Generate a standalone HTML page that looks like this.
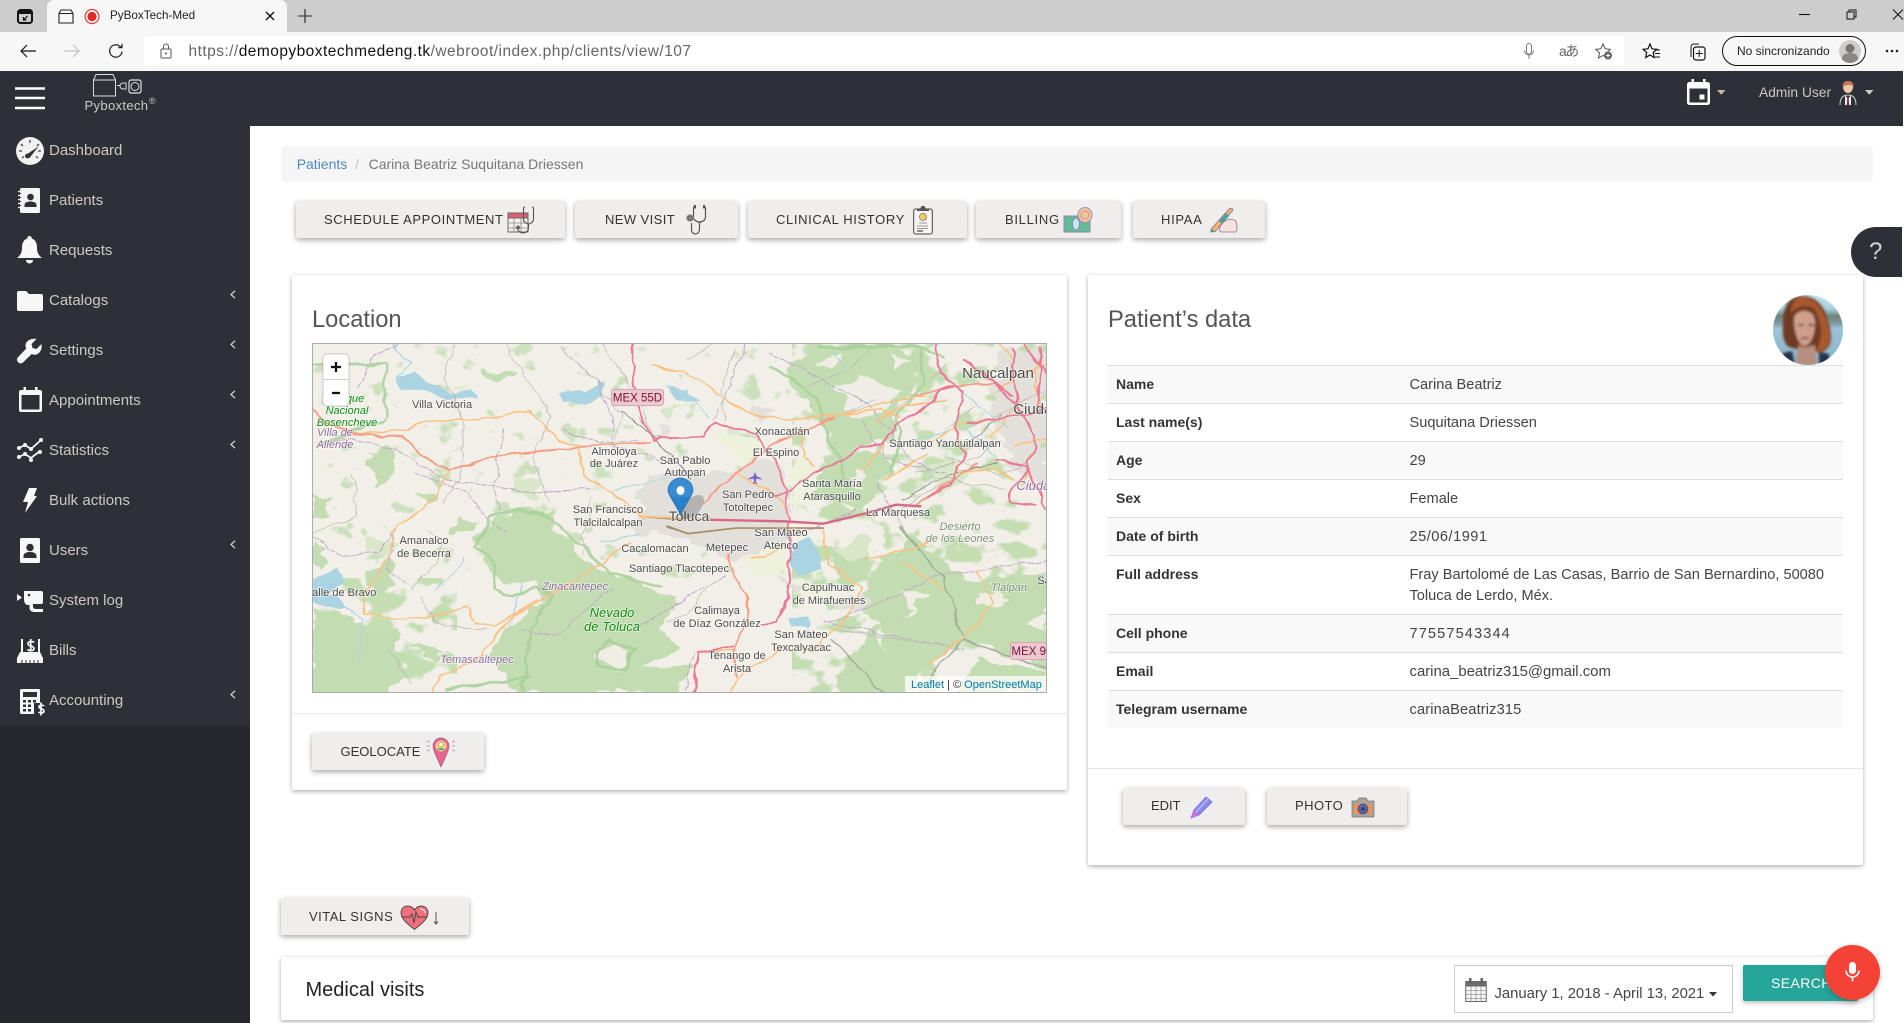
<!DOCTYPE html>
<html lang="en"><head><meta charset="utf-8"><title>PyBoxTech-Med</title>
<style>
html,body{margin:0;padding:0;width:1904px;height:1023px;overflow:hidden;background:#fff;font-family:"Liberation Sans",sans-serif;color:#333}
.a{position:absolute}
.t{position:absolute;white-space:nowrap;line-height:20px;height:20px}
svg{position:absolute;overflow:visible}
#strip{left:0;top:0;width:1904px;height:32px;background:#cdcdcd}
#tab{left:47px;top:0;width:240px;height:32px;background:#f7f7f7;border-radius:7px 7px 0 0}
#tool{left:0;top:32px;width:1904px;height:39px;background:#f7f7f7}
#addr{left:144px;top:36px;width:1480px;height:30px;background:#fff;border-radius:4px}
#pill{left:1722px;top:36px;width:142px;height:28px;border:1.5px solid #111;border-radius:15px}
#head{left:0;top:71px;width:1903px;height:55px;background:#2d3036}
#side{left:0;top:126px;width:250px;height:600px;background:#2d3036}
#side2{left:0;top:726px;width:250px;height:297px;background:#24272c}
.m{left:49px;font-size:15px;color:#cdc9c2}
.bc{left:281px;top:146px;width:1592px;height:36px;background:#f5f5f5;border-radius:4px}
.btn{position:absolute;background:#efeeec;border-radius:2px;box-shadow:0 2px 5px rgba(0,0,0,.26),0 2px 8px rgba(0,0,0,.1);height:37px}
.bt{font-size:13px;color:#333}
.card{position:absolute;background:#fff;border-radius:2px;box-shadow:0 2px 5px rgba(0,0,0,.26),0 0 4px rgba(0,0,0,.07)}
h3{position:absolute;margin:0;font-weight:400;font-size:23.700px;line-height:30px;color:#555;white-space:nowrap}
.row{position:absolute;left:1108px;width:735px;border-top:1px solid #ddd;box-sizing:border-box}
.z{background:#f9f9f9}
.l{left:1116px;font-size:14px;font-weight:700;color:#333}
.v{left:1409.5px;font-size:14.6px;color:#444}
#map path{vector-effect:non-scaling-stroke;fill:none;stroke-linejoin:round;stroke-linecap:round}
#map path.g{fill:#c3dcb1;stroke:none}
#map path.g2{fill:#d8e7c8;stroke:none}
#map path.u{fill:#e3e0db;stroke:none}
#map path.y{fill:#eff2da;stroke:none}
#map path.w{fill:#abd4e2;stroke:none}
#map path.c{fill:#f0eee4;stroke:none}
.or{stroke:#f9c283;stroke-width:1.7}
.sa{stroke:#f4a084;stroke-width:2}
.pk{stroke:#e87a96;stroke-width:2}
.gr{stroke:#bdbab4;stroke-width:.8}
.dg{stroke:#8d8b86;stroke-width:1}
.pu{stroke:#bfa8c9;stroke-width:1;stroke-dasharray:5 2}
.bo{stroke:#a8d09a;stroke-width:3;opacity:.85}
.br{stroke:#a2a89a;stroke-width:1.6;opacity:.9}
.ri{stroke:#a9d6e4;stroke-width:1.1}
#map text{font-family:"Liberation Sans",sans-serif;font-size:11px;fill:#4a4a4a;text-anchor:middle;paint-order:stroke;stroke:#fff;stroke-width:1.5px;stroke-opacity:.65}
#map text.f{fill:#0d8a0d;font-style:italic}
#map text.p{fill:#8f6a96;font-style:italic}
#map text.d{fill:#7c8f76;font-style:italic}
</style></head><body>

<!-- Browser chrome -->
<div class="a" id="strip"></div>
<div class="a" id="tab"></div>
<div class="a" id="tool"></div>
<div class="a" id="addr"></div>

<svg style="left:17px;top:9px" width="16" height="15" viewBox="0 0 16 15"><rect x="1" y="1" width="14" height="13" rx="2.5" fill="none" stroke="#111" stroke-width="2"/><rect x="1" y="1" width="14" height="4" fill="#111"/><path d="M10.5 7L6.5 11M6.5 8v3h3" stroke="#111" fill="none" stroke-width="1.2"/></svg>
<svg style="left:58px;top:9px" width="16" height="15" viewBox="0 0 16 15"><path d="M1 4.5h14V14H1zM1 4.5L3 1h10l2 3.5" fill="none" stroke="#222" stroke-width="1.1"/></svg>
<svg style="left:84px;top:9px" width="16" height="15" viewBox="0 0 16 15"><circle cx="8" cy="7.5" r="7" fill="#fff" stroke="#e53935" stroke-width="1.2"/><circle cx="8" cy="7.5" r="4.6" fill="#e5291f"/></svg>
<div class="t" style="left:110px;top:6px;font-size:11.700px;color:#222">PyBoxTech-Med</div>
<svg style="left:265px;top:11px" width="10" height="10" viewBox="0 0 10 10"><path d="M1 1l8 8M9 1l-8 8" stroke="#111" stroke-width="1.4"/></svg>
<svg style="left:298px;top:9px" width="14" height="14" viewBox="0 0 14 14"><path d="M7 0v14M0 7h14" stroke="#222" stroke-width="1.1"/></svg>
<svg style="left:1799px;top:13px" width="12" height="3"><path d="M0 1.5h11" stroke="#111" stroke-width="1.1"/></svg>
<svg style="left:1846px;top:9px" width="11" height="11" viewBox="0 0 11 11"><path d="M1 3h7v7H1zM3 3V1h7v7H8" fill="none" stroke="#111"/></svg>
<svg style="left:1892px;top:9px" width="12" height="11" viewBox="0 0 12 11"><path d="M1 .5l10 10M11 .5l-10 10" stroke="#111"/></svg>

<svg style="left:20px;top:44px" width="16" height="14" viewBox="0 0 16 14"><path d="M16 7H1M7 1L1 7l6 6" fill="none" stroke="#111" stroke-width="1.2"/></svg>
<svg style="left:64px;top:44px" width="16" height="14" viewBox="0 0 16 14"><path d="M0 7h15M9 1l6 6-6 6" fill="none" stroke="#c2c2c2" stroke-width="1.2"/></svg>
<svg style="left:108px;top:43px" width="16" height="16" viewBox="0 0 16 16"><path d="M14 8.5A6.2 6.2 0 1 1 11.5 3L14 4.5M14 .8v3.9h-3.900" fill="none" stroke="#222" stroke-width="1.2"/></svg>
<svg style="left:160px;top:43px" width="12" height="16" viewBox="0 0 12 16"><rect x="1" y="6" width="10" height="9" rx="1" fill="none" stroke="#555"/><path d="M3.500 6V3.500a2.500 2.500 0 0 1 5 0V6" fill="none" stroke="#555"/><circle cx="6" cy="10.500" r="1" fill="#555"/></svg>
<div class="t" style="left:188.500px;top:42px;font-size:15.500px;color:#666;letter-spacing:.46px">https://<span style="color:#111">demopyboxtechmedeng.tk</span>/webroot/index.php/clients/view/107</div>
<svg style="left:1524px;top:43px" width="10" height="17" viewBox="0 0 10 17"><rect x="2.500" y="0.500" width="5" height="10.500" rx="2.500" fill="none" stroke="#777"/><path d="M.5 7.500a4.500 4.500 0 0 0 9 0M5 12v4" fill="none" stroke="#777"/></svg>
<div class="t" style="left:1559px;top:41px;font-size:14px;color:#666;font-family:'Liberation Sans','Noto Sans CJK JP',sans-serif;letter-spacing:-1.500px">aあ</div>
<svg style="left:1595px;top:43px" width="18" height="17" viewBox="0 0 18 17"><path d="M8 1l2.200 4.800 5.100.6-3.800 3.500 1 5.100L8 12.500 3.500 15l1-5.100L.7 6.400l5.100-.6z" fill="none" stroke="#555"/><circle cx="13" cy="12.500" r="4" fill="#666"/><path d="M13 10.500v4M11 12.500h4" stroke="#fff"/></svg>
<svg style="left:1643px;top:43px" width="18" height="17" viewBox="0 0 18 17"><path d="M7 1l2 4.800 4.800.5-3.600 3.200 1 5L7 12l-4.300 2.500 1-5L.1 6.300l4.800-.5z" fill="none" stroke="#111" stroke-width="1.200"/><path d="M12 7h5M12 10.500h5M12 14h5" stroke="#111"/></svg>
<svg style="left:1688px;top:43px" width="18" height="18" viewBox="0 0 18 18"><path d="M3 14V4a3 3 0 0 1 3-3h5" fill="none" stroke="#111"/><rect x="5.500" y="4" width="11.500" height="13" rx="2.500" fill="none" stroke="#111" stroke-width="1.200"/><path d="M11.200 7v7M7.700 10.500h7" stroke="#111"/></svg>
<div class="a" id="pill"></div>
<div class="t" style="left:1737px;top:41px;font-size:12px;color:#222">No sincronizando</div>
<svg style="left:1839px;top:40px" width="22" height="22" viewBox="0 0 22 22"><circle cx="11" cy="11" r="11" fill="#cfcdca"/><circle cx="11" cy="8.500" r="4.500" fill="#787672"/><path d="M2.500 19c1-5 4.500-6 8.500-6s7.500 1 8.500 6a11 11 0 0 1-17 0z" fill="#8a8884"/></svg>
<svg style="left:1885px;top:49px" width="14" height="4"><circle cx="2" cy="2" r="1.300" fill="#222"/><circle cx="7" cy="2" r="1.300" fill="#222"/><circle cx="12" cy="2" r="1.300" fill="#222"/></svg>

<!-- App header -->
<div class="a" id="head"></div>
<div class="a" id="side"></div>
<div class="a" id="side2"></div>
<svg style="left:15px;top:86px" width="30" height="24"><path d="M0 2.500h30M0 12h30M0 22h30" stroke="#fff" stroke-width="2.600"/></svg>
<svg style="left:93px;top:74px" width="50" height="24" viewBox="0 0 50 24"><path d="M.5 6h22v16H.5zM.5 6L3 .5h17L22.500 6" fill="none" stroke="#ddd"/><path d="M24 11.500h3M33 9h-3a3 3 0 0 0 0 6h3z" fill="none" stroke="#ddd"/><rect x="36" y="6" width="12" height="13" rx="2" fill="none" stroke="#ddd" stroke-width="1.200"/><circle cx="42" cy="12.500" r="4" fill="none" stroke="#ddd"/></svg>
<div class="t" style="left:84.500px;top:96px;font-size:13px;letter-spacing:.35px;color:#cfcbc4">Pyboxtech</div>
<div class="t" style="left:149px;top:91px;font-size:9px;color:#ccc">®</div>

<svg style="left:1687px;top:79px" width="23" height="26" viewBox="0 0 23 26"><path d="M2.500 3h18A2.500 2.500 0 0 1 23 5.500v18a2.500 2.500 0 0 1-2.500 2.500h-18A2.500 2.500 0 0 1 0 23.500v-18A2.500 2.500 0 0 1 2.500 3zM2.500 9.500v14h18v-14z" fill="#fff" fill-rule="evenodd"/><rect x="4.500" y="0" width="2.500" height="5" fill="#fff"/><rect x="16" y="0" width="2.500" height="5" fill="#fff"/><rect x="12.500" y="15.500" width="5" height="5" fill="#fff"/></svg>
<svg style="left:1717px;top:90px" width="9" height="5"><path d="M0 0h8.500L4.200 4.800z" fill="#c4b8a6"/></svg>
<div class="t" style="left:1759px;top:83px;font-size:13.800px;color:#cdc9c2">Admin User</div>
<svg style="left:1840px;top:81px" width="16" height="25" viewBox="0 0 16 25"><ellipse cx="8" cy="6" rx="5" ry="6" fill="#e8c9ac"/><path d="M2.800 6C2 1.500 5 0 8.500 0S14 2.500 13.500 6c-2-2.500-6-3-10.700 0z" fill="#c8735a"/><path d="M0 24c0-7 3-10 8-10s8 3 8 10" fill="#2d3036" stroke="#d9d5ce"/><path d="M5 14.500l3 3 3-3v9.500H5z" fill="#eee"/><path d="M7.300 16h1.400l.5 8H6.800z" fill="#7a2a3a"/></svg>
<svg style="left:1865px;top:90px" width="9" height="5"><path d="M0 0h8.500L4.200 4.800z" fill="#cdc9c2"/></svg>

<!-- Sidebar -->
<svg style="left:16px;top:137px" width="28" height="28" viewBox="0 0 28 28"><circle cx="14" cy="14" r="14" fill="#f1f1f1"/><path d="M14 3v3M5 7l2 2M3 14h3M23 7l-2 2M25 14h-3M6 21l2-1.500M22 21l-2-1.500" stroke="#444" stroke-width="1.300"/><path d="M9 18.500L22.500 9.500 13.500 21z" fill="#333"/><circle cx="11.500" cy="19" r="2.400" fill="#333"/></svg>
<div class="t m" style="top:141px">Dashboard</div>
<svg style="left:18px;top:188px" width="23" height="25" viewBox="0 0 23 25"><rect x="2" y="0" width="20" height="25" rx="1.500" fill="#f4f4f4"/><path d="M0 3.500h4M0 7.500h4M0 11.500h4M0 15.500h4M0 19.500h4" stroke="#f4f4f4" stroke-width="1.300"/><path d="M.5 5.500h3M.5 9.500h3M.5 13.500h3M.5 17.500h3" stroke="#2d3036" stroke-width=".7"/><circle cx="12.500" cy="9" r="3.300" fill="#2d3036"/><path d="M6.500 19v-2c0-2.500 3-3.500 6-3.500s6 1 6 3.500v2z" fill="#2d3036"/></svg>
<div class="t m" style="top:191px">Patients</div>
<svg style="left:17px;top:236px" width="25" height="28" viewBox="0 0 25 28"><path d="M12.500 0a2.200 2.200 0 0 1 2.200 2.500C19 4 20 8 20 12c0 5 2 7.500 5 10H0c3-2.500 5-5 5-10 0-4 1-8 5.300-9.500A2.200 2.200 0 0 1 12.500 0z" fill="#f7f7f7"/><path d="M9 24h7c0 2-1.500 3.500-3.500 3.500S9 26 9 24z" fill="#f7f7f7"/></svg>
<div class="t m" style="top:241px">Requests</div>
<svg style="left:17px;top:291px" width="26" height="20" viewBox="0 0 26 20"><path d="M2 0h7l3 3h12a2 2 0 0 1 2 2v13a2 2 0 0 1-2 2H2a2 2 0 0 1-2-2V2a2 2 0 0 1 2-2z" fill="#f7f7f7"/></svg>
<div class="t m" style="top:291px">Catalogs</div>
<svg style="left:17px;top:339px" width="25" height="25" viewBox="0 0 25 25"><path d="M24.500 5l-5 5-4-1-1-4 5-5C14.500-1 9 1.500 8.500 6c0 1.500.3 2.500.8 3.500L1.200 18c-1.600 1.500-1.600 3.800 0 5.200 1.400 1.500 3.600 1.500 5 0l8.500-8.200c1 .5 2 .7 3.300.7 4.700-.4 7.500-5.500 6.500-10.700z" fill="#f7f7f7"/></svg>
<div class="t m" style="top:341px">Settings</div>
<svg style="left:19px;top:387px" width="23" height="25" viewBox="0 0 23 25"><path d="M2 3h19a2 2 0 0 1 2 2v18a2 2 0 0 1-2 2H2a2 2 0 0 1-2-2V5a2 2 0 0 1 2-2zM2.500 8v14.500h18V8z" fill="#f7f7f7" fill-rule="evenodd"/><rect x="4.500" y="0" width="2.500" height="5" fill="#f7f7f7"/><rect x="16" y="0" width="2.500" height="5" fill="#f7f7f7"/></svg>
<div class="t m" style="top:391px">Appointments</div>
<svg style="left:17px;top:438px" width="26" height="25" viewBox="0 0 26 25"><path d="M2 10l6-3 6 4 10-9M2 19l6-3 6 4 9-7" fill="none" stroke="#f7f7f7" stroke-width="1.800"/><g fill="#f7f7f7"><circle cx="2" cy="10" r="2"/><circle cx="8" cy="7" r="2"/><circle cx="14" cy="11" r="2"/><circle cx="24" cy="2" r="2"/><circle cx="2" cy="19" r="2"/><circle cx="8" cy="16" r="2"/><circle cx="14" cy="22" r="2"/><circle cx="23" cy="14" r="2"/></g></svg>
<div class="t m" style="top:441px">Statistics</div>
<svg style="left:23px;top:488px" width="14" height="25" viewBox="0 0 14 25"><path d="M6 0h8l-3 8h3L2 25l3-11H0z" fill="#f7f7f7"/></svg>
<div class="t m" style="top:491px">Bulk actions</div>
<svg style="left:20px;top:538px" width="20" height="25" viewBox="0 0 20 25"><rect width="20" height="25" rx="1.500" fill="#f7f7f7"/><circle cx="10" cy="9.500" r="3.700" fill="#2d3036"/><path d="M3.500 20v-2c0-2.700 3-4 6.500-4s6.500 1.300 6.500 4v2z" fill="#2d3036"/></svg>
<div class="t m" style="top:541px">Users</div>
<svg style="left:17px;top:591px" width="26" height="21" viewBox="0 0 26 21"><path d="M0 3l5 3.500L0 10z" fill="#f7f7f7"/><path d="M7 0h17a2 2 0 0 1 2 2v9a2 2 0 0 1-2 2h-8v2c0 2 1 3 3 3h7v3h-9c-3 0-4.500-2-4.500-4v-3H10C7.500 13 7 10 7 8z" fill="#f7f7f7"/><circle cx="12" cy="4" r="1.300" fill="#2d3036"/></svg>
<div class="t m" style="top:591px">System log</div>
<svg style="left:17px;top:639px" width="26" height="24" viewBox="0 0 26 24"><path d="M4 0h2v13H4zM21 0h2v13h-2z" fill="#f7f7f7"/><path d="M3 13h20l3 6v5H0v-5z" fill="#f7f7f7"/><path d="M5 21v3M9 21v3M13 21v3M17 21v3M21 21v3" stroke="#2d3036"/><path d="M17 3.500c-1-1.500-6-1.500-6 1.200 0 3 6 1.800 6 4.800 0 2.800-5.500 2.600-6.500.8M13.700 0v12" fill="none" stroke="#f7f7f7" stroke-width="1.700"/></svg>
<div class="t m" style="top:641px">Bills</div>
<svg style="left:20px;top:689px" width="26" height="27" viewBox="0 0 26 27"><rect width="20" height="25" rx="1.500" fill="#f7f7f7"/><rect x="3" y="3" width="14" height="5" fill="#2d3036"/><path d="M3 11h3v2.500H3zM8 11h3v2.500H8zM13 11h3v2.500h-3zM3 15.500h3V18H3zM8 15.500h3V18H8zM3 20h3v2.500H3zM8 20h3v2.500H8z" fill="#2d3036"/><rect x="14" y="14" width="12" height="13" fill="#2d3036"/><path d="M24 17c-1-1.200-5-1.200-5 .8 0 2.700 5 1.400 5 4.400 0 2-4 2-5.500.8M21 13.500v13" fill="none" stroke="#f7f7f7" stroke-width="1.700"/></svg>
<div class="t m" style="top:691px">Accounting</div>
<svg style="left:230px;top:290px" width="6" height="9" viewBox="0 0 6 9"><path d="M5 .8L1 4.500l4 3.700" fill="none" stroke="#d5d2cc" stroke-width="1.300"/></svg>
<svg style="left:230px;top:340px" width="6" height="9" viewBox="0 0 6 9"><path d="M5 .8L1 4.500l4 3.700" fill="none" stroke="#d5d2cc" stroke-width="1.300"/></svg>
<svg style="left:230px;top:390px" width="6" height="9" viewBox="0 0 6 9"><path d="M5 .8L1 4.500l4 3.700" fill="none" stroke="#d5d2cc" stroke-width="1.300"/></svg>
<svg style="left:230px;top:440px" width="6" height="9" viewBox="0 0 6 9"><path d="M5 .8L1 4.500l4 3.700" fill="none" stroke="#d5d2cc" stroke-width="1.300"/></svg>
<svg style="left:230px;top:540px" width="6" height="9" viewBox="0 0 6 9"><path d="M5 .8L1 4.500l4 3.700" fill="none" stroke="#d5d2cc" stroke-width="1.300"/></svg>
<svg style="left:230px;top:690px" width="6" height="9" viewBox="0 0 6 9"><path d="M5 .8L1 4.500l4 3.700" fill="none" stroke="#d5d2cc" stroke-width="1.300"/></svg>

<!-- Breadcrumb -->
<div class="a bc"></div>
<div class="t" style="left:296.700px;top:154px;font-size:14px;color:#4a8ac6">Patients</div>
<div class="t" style="left:355px;top:154px;font-size:14px;color:#c4c4c4">/</div>
<div class="t" style="left:368.600px;top:154px;font-size:14px;color:#777">Carina Beatriz Suquitana Driessen</div>

<!-- Action buttons -->
<div class="btn" style="left:296px;top:201px;width:269px"></div>
<div class="t bt" style="left:324px;top:209.500px;letter-spacing:.6px">SCHEDULE APPOINTMENT</div>
<svg style="left:507px;top:205px" width="30" height="30" viewBox="0 0 30 30"><rect x="1" y="8" width="20" height="19" fill="#f4f1ec" stroke="#666"/><rect x="1" y="8" width="20" height="5" fill="#e0606a" stroke="#666"/><path d="M7 13v14M14 13v14M1 18h20M1 23h20" stroke="#888" stroke-width=".8"/><path d="M18 2c-1 0-1.500 1-1.500 2v10c0 3 3 5 5 5s5-2 5-5V4c0-1-.5-2-1.500-2M21.500 19v4c0 3-3 5-5 5s-5-1-6-4" fill="none" stroke="#555" stroke-width="1.100"/><circle cx="11" cy="22.500" r="2" fill="#666"/></svg>

<div class="btn" style="left:575px;top:201px;width:163px"></div>
<div class="t bt" style="left:605px;top:209.500px;letter-spacing:.4px">NEW VISIT</div>
<svg style="left:683px;top:205px" width="25" height="30" viewBox="0 0 25 30"><path d="M12 1.500c-1 0-1.500.8-1.500 2V12c0 3 3 5 6 5s6-2 6-5V3.500c0-1.200-.5-2-1.500-2" fill="none" stroke="#555" stroke-width="1.200"/><path d="M16.500 17v7c0 3-2 5-4 5s-4-1.500-4-4v-7" fill="none" stroke="#555" stroke-width="1.200"/><circle cx="7" cy="13" r="3.300" fill="#666" stroke="#999"/><circle cx="7" cy="13" r="1.200" fill="#999"/><rect x="11" y="0" width="2" height="3.500" fill="#555"/><rect x="20" y="0" width="2" height="3.500" fill="#555"/></svg>

<div class="btn" style="left:747.500px;top:201px;width:219.500px"></div>
<div class="t bt" style="left:776px;top:209.500px;letter-spacing:.62px">CLINICAL HISTORY</div>
<svg style="left:913px;top:205px" width="20" height="30" viewBox="0 0 20 30"><rect x=".7" y="4" width="18.600" height="25" rx="2" fill="#f7f5f1" stroke="#444"/><path d="M7 4L8.500 1h3L13 4h3v2H4V4z" fill="#555"/><circle cx="10" cy="12" r="3.600" fill="#f3c95c" stroke="#777" stroke-width=".7"/><path d="M6 18h8M4 21h11M4 23.500h11" stroke="#999"/><path d="M4 26h6" stroke="#444" stroke-width="1.200"/></svg>

<div class="btn" style="left:976px;top:201px;width:145px"></div>
<div class="t bt" style="left:1005px;top:209.500px;letter-spacing:.7px">BILLING</div>
<svg style="left:1064px;top:207px" width="29" height="26" viewBox="0 0 29 26"><rect x="0" y="9" width="26" height="16" fill="#62bd96" stroke="#9d7fae"/><ellipse cx="12" cy="17" rx="3.500" ry="6" fill="#c8e6ee" stroke="#7f8faa"/><path d="M21 .5c3.800 0 7 3.100 7 7.500s-3.200 7.500-7 7.500-7-3.100-7-7.500 3.200-7.500 7-7.500z" fill="#f0c59d" stroke="#a98bbc"/><circle cx="21" cy="8" r="4" fill="none" stroke="#c79b75"/></svg>

<div class="btn" style="left:1133px;top:201px;width:132px"></div>
<div class="t bt" style="left:1161px;top:209.500px;letter-spacing:.7px">HIPAA</div>
<svg style="left:1208px;top:207px" width="30" height="26" viewBox="0 0 30 26"><path d="M3 22L21 2c1.500-1.500 4-.8 3.800 1.200L7 25z" fill="#f2b36e" stroke="#8d6fa4" stroke-width=".8"/><path d="M3 22l-1 3.500L7 25z" fill="#4ba68f"/><path d="M11 14L18 6l3 3-7 8z" fill="#4ba68f"/><path d="M12 20c3-6 8-9 14-7 3 1 3 5 3 9l-1 3H13c-2-1-2-3-1-5z" fill="#f5e4dd" stroke="#8d6fa4" stroke-width=".8"/></svg>

<!-- Location card -->
<div class="card" style="left:292px;top:275px;width:775px;height:515px"></div>
<h3 style="left:312px;top:304.500px">Location</h3>

<svg id="map" style="left:312px;top:343px;overflow:hidden" width="735" height="350" viewBox="0 0 735 350">
<defs>
<filter id="wob" filterUnits="userSpaceOnUse" x="-50" y="-50" width="1700" height="1250" color-interpolation-filters="sRGB"><feTurbulence type="fractalNoise" baseFrequency=".018" numOctaves="3" seed="7"/><feDisplacementMap in="SourceGraphic" scale="55" xChannelSelector="R" yChannelSelector="G"/></filter>
<filter id="wob2" filterUnits="userSpaceOnUse" x="-50" y="-50" width="1700" height="1250" color-interpolation-filters="sRGB"><feTurbulence type="fractalNoise" baseFrequency=".022" numOctaves="2" seed="3"/><feDisplacementMap in="SourceGraphic" scale="22" xChannelSelector="R" yChannelSelector="G"/></filter>
<filter id="spk" x="0" y="0" width="1" height="1" color-interpolation-filters="sRGB"><feTurbulence type="fractalNoise" baseFrequency=".035 .045" numOctaves="3" seed="11"/><feColorMatrix values="0 0 0 0 .77  0 0 0 0 .87  0 0 0 0 .70  9 0 0 0 -4.700"/></filter>
<filter id="spk2" x="0" y="0" width="1" height="1" color-interpolation-filters="sRGB"><feTurbulence type="fractalNoise" baseFrequency=".04 .05" numOctaves="3" seed="23"/><feColorMatrix values="0 0 0 0 .80  0 0 0 0 .88  0 0 0 0 .74  9 0 0 0 -5.800"/></filter>
</defs>
<rect width="735" height="350" fill="#f2efe9"/>
<rect x="480" y="0" width="255" height="350" filter="url(#spk)"/>
<rect x="0" y="235" width="145" height="115" filter="url(#spk)"/>
<rect x="0" y="0" width="480" height="235" filter="url(#spk2)"/>
<g transform="translate(-12.100,-13.300) scale(.48473,.33333)">
<g filter="url(#wob)">
<path class="u" d="M1440 60L1545 60V500L1470 400L1430 250Z"/>
<path class="g" d="M360 640L400 570L470 540L520 560L550 630L590 700L650 730L720 770L780 820L750 880L780 960L720 1000L660 1088H430L400 960L420 900L500 820L490 770L420 760L395 720Z"/>
<path class="c" d="M620 970L650 945L680 975L670 1010L630 1010Z"/>
<path class="g" d="M1000 130L1050 50L1240 45L1290 110L1270 180L1230 260L1210 330L1150 350L1110 400L1080 310L1050 220Z"/>
<path class="c" d="M1100 170L1180 150L1240 190L1190 250L1130 250ZM1060 90L1110 80L1090 120ZM1220 70L1260 90L1230 120Z"/>
<path class="g" d="M1090 380L1200 350L1215 430L1200 500L1160 540L1090 520L1050 500L1075 430Z"/>
<path class="c" d="M1120 430L1170 420L1160 480Z"/>
<path class="g" d="M1180 720L1260 620L1340 700L1380 760L1545 720V1010L1370 930L1300 1000L1250 1090H1170L1210 920L1160 830Z"/>
<path class="c" d="M1400 790L1440 780L1450 830L1400 830ZM1250 780L1290 800L1260 850ZM1500 880L1540 860L1540 920Z"/>
<path class="g" d="M1400 1000L1545 1020V1090H1330Z"/>
<path class="g" d="M27 830L110 880L190 900L225 1010L185 1090H27Z"/>
<path class="g" d="M27 490L60 510L60 560L27 570ZM145 370L185 360L195 450L160 470ZM245 480L290 500L270 530ZM30 620L60 700L27 720ZM320 560L365 570L350 610L310 600ZM130 720L190 700L210 760L150 800ZM220 950L300 960L280 1000ZM690 510L760 480L770 530L720 530ZM1080 640L1170 680L1150 760L1095 720ZM1120 1000L1200 880L1190 1090H1100ZM380 110L440 125L420 150L385 140ZM700 1020L800 1010L780 1090H660ZM270 440L300 430L290 470Z"/>
<path class="g2" d="M140 620L200 640L190 690L150 680ZM440 450L500 450L490 510L440 490ZM1100 660L1170 610L1180 680L1130 700ZM1300 420L1350 380L1380 440L1320 490ZM750 230L790 220L770 270Z"/>
<path class="y" d="M870 300L945 325L925 395L880 380ZM1015 390L1060 400L1050 520L1010 520ZM915 660L1000 650L1000 750L930 740ZM1010 750L1100 760L1090 800L1010 790Z"/>
<path class="u" d="M720 430L830 440L900 420L960 380L1000 430L1010 560L1000 640L900 690L830 650L760 620L690 600L700 500ZM1100 800L1170 790L1180 830L1100 840ZM740 280L770 310L750 330ZM930 220L970 240L950 275ZM1000 740L1050 780L1010 790Z"/>
</g>
<g filter="url(#wob2)">
<path class="w" d="M205 145L235 125L260 160L290 165L310 195L350 175L365 210L300 210L255 180L205 180ZM535 190L590 185L625 160L630 195L590 225L545 215ZM750 170L800 180L830 215L780 205ZM27 745L80 720L90 760L60 790L100 830L50 835L27 810ZM1015 650L1050 620L1075 680L1075 720L1030 740L1010 700ZM1010 860L1050 860L1050 895L1010 890Z"/>
<path class="ri" d="M190 40L230 100L205 145M800 180L840 260M640 480L700 470L760 440M100 830L130 870L120 1000M1100 60L1120 120M1320 130L1400 230L1460 300M1370 300L1440 380M1230 350L1350 300M620 640L700 610M280 780L320 730L340 680M460 760L430 900M1000 600L1010 650M1100 270L1180 210"/>
<path class="pu" d="M40 350L110 320L210 370L300 450L400 470L480 490L600 480M200 40L150 90L120 180M420 300L400 480L410 540M540 50L620 170L640 250L650 350L740 390M240 430L330 480L420 610M30 620L90 680L160 670L200 600L180 720L220 760M540 300L620 340L690 330M460 900L530 920L560 880L640 780M920 40L880 200L850 270M970 70L1050 130L1170 220L1230 330L1290 420M1160 280L1210 390L1330 430M1150 540L1010 620M1090 880L1230 800L1310 740L1540 690M1080 880L1270 930L1370 960M1190 460L1250 600M700 890L790 810L880 740M800 1080L810 970"/>
<path class="gr" d="M320 40L300 140L340 300L330 440L300 520M420 40L470 150L520 260L480 380L510 510M590 120L660 250L650 360M620 40L700 200L730 320M850 40L800 90M900 60L870 180L880 270M1050 170L1130 120L1180 50M1230 240L1340 100M700 260L730 320L770 330M260 600L300 640L280 700L230 780M250 800L280 880L380 900M180 960L230 1060M110 440L120 560L30 610M600 500L580 680M840 780L800 850L760 880M1100 900L1200 920L1300 940M1330 380L1440 440L1500 400M1270 430L1400 380L1450 330M1300 440L1460 480M1240 530L1400 410M1330 300L1390 230M1430 260L1540 180"/>
<path class="dg" d="M660 240L730 320L810 450M760 590L800 610M1240 510L1330 440L1440 400M1390 330L1450 250"/>
<path class="bo" d="M30 105H175V270L45 345M975 110L1060 200L1090 320L1130 470M1280 50L1290 160L1230 260L1240 330L1220 420M1240 590L1280 660M1330 80L1280 50L1070 50M300 1080L470 1040"/>
<path class="bo" d="M395 560L380 620L360 650L400 700L400 780L440 800L490 770L520 800L490 860L470 960L460 1088M740 770L640 730L560 620L500 550L450 540L395 560M610 970L640 930L690 960L670 1020L620 1010Z"/>
<path class="br" d="M1240 590L1330 750L1370 930L1540 1020M1370 930L1320 1000L1290 1088M1100 930L1200 1088"/>
<path class="or" d="M130 310L215 300L240 280L300 270L370 270L400 265L440 245L475 245L530 330L580 345L585 440L610 460L640 490L680 530L705 565M730 110L790 130L870 200L940 260L1000 270L1100 260L1150 250L1200 240L1240 260M1130 250L1200 220L1290 200M680 640L620 700L550 770L510 800L440 860L400 920L380 980L290 1040L275 1088M305 420L280 510L200 590L180 690L130 800L130 850L200 870L300 855L340 830L360 880L400 890L490 810M1040 300L1040 380L1060 410M1080 600L1090 700L1160 770L1130 860L1060 960L1000 950L900 1050L890 1088M900 430L1000 520L1010 570M930 690L960 680L1000 640M820 970L900 960M1170 690L1300 640M1240 700L1330 780M1400 720L1430 820L1370 920L1300 1000M1190 270L1250 230L1330 210M1300 340L1370 280L1440 270M1430 190L1480 140L1540 100M1440 40L1470 90M1290 380L1200 450M1360 430L1430 420L1470 450M1470 350L1540 330M1510 120L1530 250M1480 220L1430 320M1510 360L1490 470M1200 350L1160 420"/>
<path class="sa" d="M27 240L60 290L110 310L160 318L215 320L255 380L305 420L370 400L420 375L580 352L720 335M830 520L900 430L985 340L1040 295L1100 265M1270 200L1345 170L1430 160M880 670L905 760L930 850L895 950L900 1040M1260 530L1300 500L1400 400"/>
<path class="pk" d="M685 40L690 130L700 240L730 330L770 325L835 322L855 280L900 295L940 315L980 390L1005 500L1008 580L1010 680L1005 800L985 880L950 885M975 500L1010 480L1060 425L1110 400L1160 350L1200 345L1225 295L1280 240L1310 210L1320 180L1345 170M1310 40L1320 130L1370 190L1350 290L1370 370L1340 470L1300 500M815 1088L820 970L890 950M1430 160L1480 230L1470 60M1480 230L1520 320L1500 420L1540 540M1490 40L1540 130M1460 510L1520 530M1380 280L1540 240M1530 50L1520 240M1370 90L1470 200M1440 390L1500 410L1460 510"/>
</g>
<path stroke="#d66a84" stroke-width="2.400" d="M840 570L1000 575L1080 582L1170 550L1230 525L1280 530"/>
<path stroke="#a78a60" stroke-width="1.600" d="M760 590L800 612L900 595L1080 595M700 560L790 570"/>
<path class="or" d="M700 560L790 565L845 570"/>
</g>

<text x="130" y="65">Villa Victoria</text>
<text class="f" x="43" y="59" style="font-size:11px">que</text>
<text class="f" x="35" y="71">Nacional</text>
<text class="f" x="35" y="83">Bosencheve</text>
<text class="p" x="23" y="93">Villa de</text>
<text class="p" x="23" y="105">Allende</text>
<text x="302" y="112">Almoloya</text>
<text x="302" y="124">de Juárez</text>
<text x="373" y="121">San Pablo</text>
<text x="373" y="133">Autopan</text>
<text x="296" y="170">San Francisco</text>
<text x="296" y="183">Tlalcilalcalpan</text>
<text x="377" y="178" style="font-size:14px">Toluca</text>
<text x="436" y="155">San Pedro</text>
<text x="436" y="168">Totoltepec</text>
<text x="470" y="92">Xonacatlán</text>
<text x="464" y="113">El Espino</text>
<text x="520" y="144">Santa María</text>
<text x="520" y="157">Atarasquillo</text>
<text x="586" y="173">La Marquesa</text>
<text x="633" y="104">Santiago Yancuitlalpan</text>
<text x="686" y="35" style="font-size:15px">Naucalpan</text>
<text x="725" y="71" style="font-size:15px">Ciudad</text>
<text x="469" y="193">San Mateo</text>
<text x="469" y="206">Atenco</text>
<text x="112" y="201">Amanalco</text>
<text x="112" y="214">de Becerra</text>
<text x="343" y="209">Cacalomacan</text>
<text x="415" y="208">Metepec</text>
<text x="367" y="229">Santiago Tlacotepec</text>
<text x="516" y="248">Capulhuac</text>
<text x="517" y="261">de Mirafuentes</text>
<text x="405" y="271">Calimaya</text>
<text x="405" y="284">de Díaz González</text>
<text x="489" y="295">San Mateo</text>
<text x="489" y="308">Texcalyacac</text>
<text x="425" y="316">Tenango de</text>
<text x="425" y="329">Arista</text>
<text x="29" y="253">Valle de Bravo</text>
<text class="p" x="263" y="247">Zinacantepec</text>
<text class="f" x="300" y="274" style="font-size:13px">Nevado</text>
<text class="f" x="300" y="288" style="font-size:13px">de Toluca</text>
<text class="p" x="165" y="320">Temascaltepec</text>
<text class="d" x="648" y="187">Desierto</text>
<text class="d" x="648" y="199">de los Leones</text>
<text class="d" x="697" y="248">Tlalpan</text>
<text x="732" y="241">Sa</text>
<text class="p" x="725" y="147" style="font-size:13px">Ciudad</text>

<path d="M443 132l1.500 4 5 2.500v1l-5-1-.8 3.500 1.500 1.200v.8l-2.200-.7-2.200.7v-.8l1.500-1.200-.8-3.500-5 1v-1l5-2.500z" transform="translate(0,-3)" style="fill:#7a5fd0;stroke:none;vector-effect:none"/>

<!-- road shields -->
<rect x="299.500" y="46.500" width="52" height="16" rx="2.500" fill="#ecc8d0" stroke="#d8a5b2"/>
<text x="325.500" y="58.500" style="fill:#7a1235;stroke:none;font-size:11.500px">MEX 55D</text>
<rect x="698.500" y="299.500" width="44" height="17" rx="2.500" fill="#ecc8d0" stroke="#d8a5b2"/>
<text x="720" y="312" style="fill:#7a1235;stroke:none;font-size:11.500px">MEX 95</text>

<!-- marker -->
<ellipse cx="380" cy="164" rx="15" ry="8" fill="#000" opacity=".2" transform="rotate(-45 380 164)"/>
<path d="M368.500 172C363 160 356 152 356 147.500a12.500 12.500 0 0 1 25 0c0 4.500-7 12.500-12.500 24.500z" style="fill:#2a81cb;stroke:#2171b5;stroke-width:.7;vector-effect:none"/>
<path d="M368.500 135.500a12 12 0 0 1 12 12c0 2-1 4-2.500 6.500h-19c-1.500-2.500-2.500-4.500-2.500-6.500a12 12 0 0 1 12-12z" style="fill:#4b9ad8;opacity:.45;vector-effect:none"/>
<ellipse cx="368.500" cy="147.500" rx="4" ry="4.500" fill="#fff"/>

<!-- attribution -->
<rect x="593" y="333" width="142" height="17" fill="#fff" fill-opacity=".75"/>
<text x="599" y="345" style="text-anchor:start;stroke:none;font-size:11px;fill:#333"><tspan fill="#0078a8">Leaflet</tspan> | © <tspan fill="#0078a8">OpenStreetMap</tspan></text>

<!-- zoom control -->
<rect x="11" y="11" width="26" height="52" rx="4" fill="#fff" stroke="rgba(0,0,0,.12)" stroke-width="1.500"/>
<path d="M11 36.500h26" style="stroke:#ccc;vector-effect:none"/>
<path d="M24 19v10M19 24h10M20 50h8" style="stroke:#111;stroke-width:2.300;stroke-linecap:butt;vector-effect:none"/>
</svg>
<div class="a" style="left:312px;top:343px;width:733px;height:348px;border:1px solid #aaa;pointer-events:none"></div>

<div class="a" style="left:292px;top:713px;width:775px;height:1px;background:#e8e8e8"></div>
<div class="btn" style="left:312px;top:733px;width:172px"></div>
<div class="t bt" style="left:340.500px;top:742px">GEOLOCATE</div>
<svg style="left:426px;top:736px" width="30" height="32" viewBox="0 0 30 32"><path d="M15 31C12 24 7 15 7 10a8 8 0 0 1 16 0c0 5-5 14-8 21z" fill="#e5678e" stroke="#a9588a" stroke-width=".7"/><circle cx="15" cy="10" r="5.500" fill="#f3d27a"/><circle cx="15" cy="8.500" r="2.500" fill="#fff3e0" stroke="#a46" stroke-width=".5"/><path d="M11 14c1-2.500 7-2.500 8 0z" fill="#4aa98b"/><path d="M1 5l3 1M1 10h3M1 15l3-1M29 5l-3 1M29 10h-3M29 15l-3-1" stroke="#b89ac8"/></svg>

<!-- Patient card -->
<div class="card" style="left:1088px;top:275px;width:775px;height:590px"></div>
<h3 style="left:1108px;top:304.500px">Patient’s data</h3>
<svg style="left:1773px;top:295px" width="70" height="70" viewBox="0 0 70 70">
<defs><linearGradient id="sky" x1="0" y1="0" x2="0" y2="1"><stop offset="0" stop-color="#bfe5f3"/><stop offset=".2" stop-color="#a8cfdc"/><stop offset=".3" stop-color="#6e8478"/><stop offset=".4" stop-color="#7d9aa0"/><stop offset=".48" stop-color="#9cc4d8"/><stop offset="1" stop-color="#86b2c9"/></linearGradient><clipPath id="ci"><circle cx="35" cy="35" r="35"/></clipPath><filter id="sf" x="-10%" y="-10%" width="120%" height="120%"><feGaussianBlur stdDeviation="1.200"/></filter></defs>
<g clip-path="url(#ci)"><rect width="70" height="70" fill="url(#sky)"/>
<g filter="url(#sf)">
<path d="M26 1C14 3 9 16 10 30c-1 10 1 19 6 22l8 2 12-2 10 6c6-1 12-7 12-14 0-7-1-13-4-20C52 13 45 2 30 1z" fill="#6e3a22"/>
<path d="M26 2C20 5 18 12 18 18c8-8 18-9 24-3 4 6 6 16 6 26l-4 16c6 0 13-6 13-13 0-8-3-18-6-24C47 10 40 2 26 2z" fill="#a9592f"/>
<path d="M21 24c0-5 6-9 12-8s9 5 9 12c0 9-3 21-10 23-7-1-11-14-11-27z" fill="#d0a08c"/>
<path d="M25 30h6M35 30h6" stroke="#5e5058" stroke-width="2"/><path d="M27 35l2 1M37 35l-2 1" stroke="#b7816e" stroke-width="1"/><path d="M28 43h8" stroke="#a35f5a" stroke-width="2.500"/>
<path d="M26 49c2 3 6 4 8 3l8-2 2 20H22z" fill="#b78f7e"/>
<path d="M10 58l9-2 3 14H10zM46 57l10 2v11H46z" fill="#253248"/></g></g></svg>

<div class="row z" style="top:365px;height:38px"></div>
<div class="row" style="top:403px;height:38px"></div>
<div class="row z" style="top:441px;height:38px"></div>
<div class="row" style="top:479px;height:38px"></div>
<div class="row z" style="top:517px;height:38px"></div>
<div class="row" style="top:555px;height:59px"></div>
<div class="row z" style="top:614px;height:38px"></div>
<div class="row" style="top:652px;height:38px"></div>
<div class="row z" style="top:690px;height:38px"></div>

<div class="t l" style="top:374px">Name</div><div class="t v" style="top:375px">Carina Beatriz</div>
<div class="t l" style="top:412px">Last name(s)</div><div class="t v" style="top:413px">Suquitana Driessen</div>
<div class="t l" style="top:450px">Age</div><div class="t v" style="top:451px">29</div>
<div class="t l" style="top:488px">Sex</div><div class="t v" style="top:489px">Female</div>
<div class="t l" style="top:526px">Date of birth</div><div class="t v" style="top:527px;letter-spacing:.5px">25/06/1991</div>
<div class="t l" style="top:564px">Full address</div><div class="t v" style="top:565px">Fray Bartolomé de Las Casas, Barrio de San Bernardino, 50080</div>
<div class="t v" style="top:586px">Toluca de Lerdo, Méx.</div>
<div class="t l" style="top:623px">Cell phone</div><div class="t v" style="top:624px;letter-spacing:1.100px">77557543344</div>
<div class="t l" style="top:661px">Email</div><div class="t v" style="top:662px;font-size:14.900px">carina_beatriz315@gmail.com</div>
<div class="t l" style="top:699px">Telegram username</div><div class="t v" style="top:700px;letter-spacing:.15px">carinaBeatriz315</div>

<div class="a" style="left:1088px;top:768px;width:775px;height:1px;background:#e8e8e8"></div>
<div class="btn" style="left:1123px;top:788px;width:122px"></div>
<div class="t bt" style="left:1151px;top:796px">EDIT</div>
<svg style="left:1190px;top:796px" width="23" height="23" viewBox="0 0 23 23"><path d="M1 22L4 14 16 1l6 5L9 19z" fill="#8a8cf0" stroke="#6a6ad8" stroke-width=".8"/><path d="M1 22l3-8 5 5z" fill="#d36fe0"/><path d="M6 16L18 3" stroke="#c8c8fa"/></svg>
<div class="btn" style="left:1266.500px;top:788px;width:140.500px"></div>
<div class="t bt" style="left:1295px;top:796px;letter-spacing:.45px">PHOTO</div>
<svg style="left:1351px;top:797px" width="24" height="21" viewBox="0 0 24 21"><path d="M1 4h5l2-3h7l2 3h6v16H1z" fill="#a6a19a" stroke="#777" stroke-width=".7"/><rect x="3" y="7" width="18" height="10" fill="#ec9455"/><circle cx="12" cy="12" r="4.800" fill="#5a6ba8" stroke="#444a78"/><circle cx="12" cy="12" r="2" fill="#38406e"/></svg>

<!-- Vital signs -->
<div class="btn" style="left:281px;top:898px;width:188px"></div>
<div class="t bt" style="left:309px;top:907px;letter-spacing:.5px">VITAL SIGNS</div>
<svg style="left:400px;top:905px" width="29" height="25" viewBox="0 0 29 25"><path d="M14.500 24.500C7 18.500 1 14 1 7.500 1 3.500 4 1 7.500 1c3 0 5.500 1.500 7 4 1.500-2.500 4-4 7-4C25 1 28 3.500 28 7.500c0 6.500-6 11-13.500 17z" fill="#f0707e" stroke="#333" stroke-width=".8"/><path d="M1.500 12H10l2-3 2 9 2-11 2 5h9.500" fill="none" stroke="#444" stroke-width=".9"/><path d="M20 4c3 0 5 2 5 4" stroke="#fff" fill="none"/></svg>
<svg style="left:433px;top:912px" width="6" height="13" viewBox="0 0 6 13"><path d="M3 0v12M1 9.500L3 12l2-2.500" fill="none" stroke="#444" stroke-width=".9"/></svg>

<!-- Medical visits -->
<div class="card" style="left:281px;top:957px;width:1592px;height:63px"></div>
<div class="t" style="left:305.500px;top:980px;font-size:20px;color:#222">Medical visits</div>
<div class="a" style="left:1454px;top:965px;width:277px;height:46px;border:1px solid #ccc"></div>
<svg style="left:1465px;top:978px" width="22" height="24" viewBox="0 0 22 24"><rect x=".7" y="3.500" width="20.600" height="20" fill="#f6f6f6" stroke="#666"/><rect x=".7" y="3.500" width="20.600" height="5" fill="#6c6c6c"/><path d="M6 8.500v15M11 8.500v15M16 8.500v15M1 12.500h20M1 16.500h20M1 20.500h20" stroke="#999" stroke-width=".8"/><rect x="4" y="0" width="2.500" height="6" fill="#666"/><rect x="15.500" y="0" width="2.500" height="6" fill="#666"/></svg>
<div class="t" style="left:1494.500px;top:984px;font-size:14.800px;color:#444">January 1, 2018 - April 13, 2021</div>
<svg style="left:1709px;top:992px" width="8" height="5"><path d="M0 0h8L4 4.500z" fill="#333"/></svg>
<div class="a" style="left:1743px;top:965px;width:115px;height:36px;background:#26a69a;border-radius:2px;box-shadow:0 2px 5px rgba(0,0,0,.26)"></div>
<div class="t" style="left:1771px;top:973px;font-size:14px;color:#fff;letter-spacing:.4px">SEARCH</div>
<div class="a" style="left:1825px;top:945px;width:55px;height:55px;border-radius:50%;background:#f44336;box-shadow:0 2px 6px rgba(0,0,0,.25)"></div>
<svg style="left:1845px;top:962px" width="15" height="20" viewBox="0 0 15 20"><rect x="4" y="0" width="7" height="12" rx="3.500" fill="#fff"/><path d="M1 8.500a6.500 6.500 0 0 0 13 0M7.500 15v4.500" fill="none" stroke="#fff" stroke-width="1.600"/></svg>

<!-- Help tab -->
<div class="a" style="left:1851px;top:227px;width:51px;height:50px;background:#2d3036;border-radius:25px 0 0 25px"></div>
<div class="t" style="left:1869px;top:242px;font-size:24px;color:#cfd6da">?</div>

</body></html>
